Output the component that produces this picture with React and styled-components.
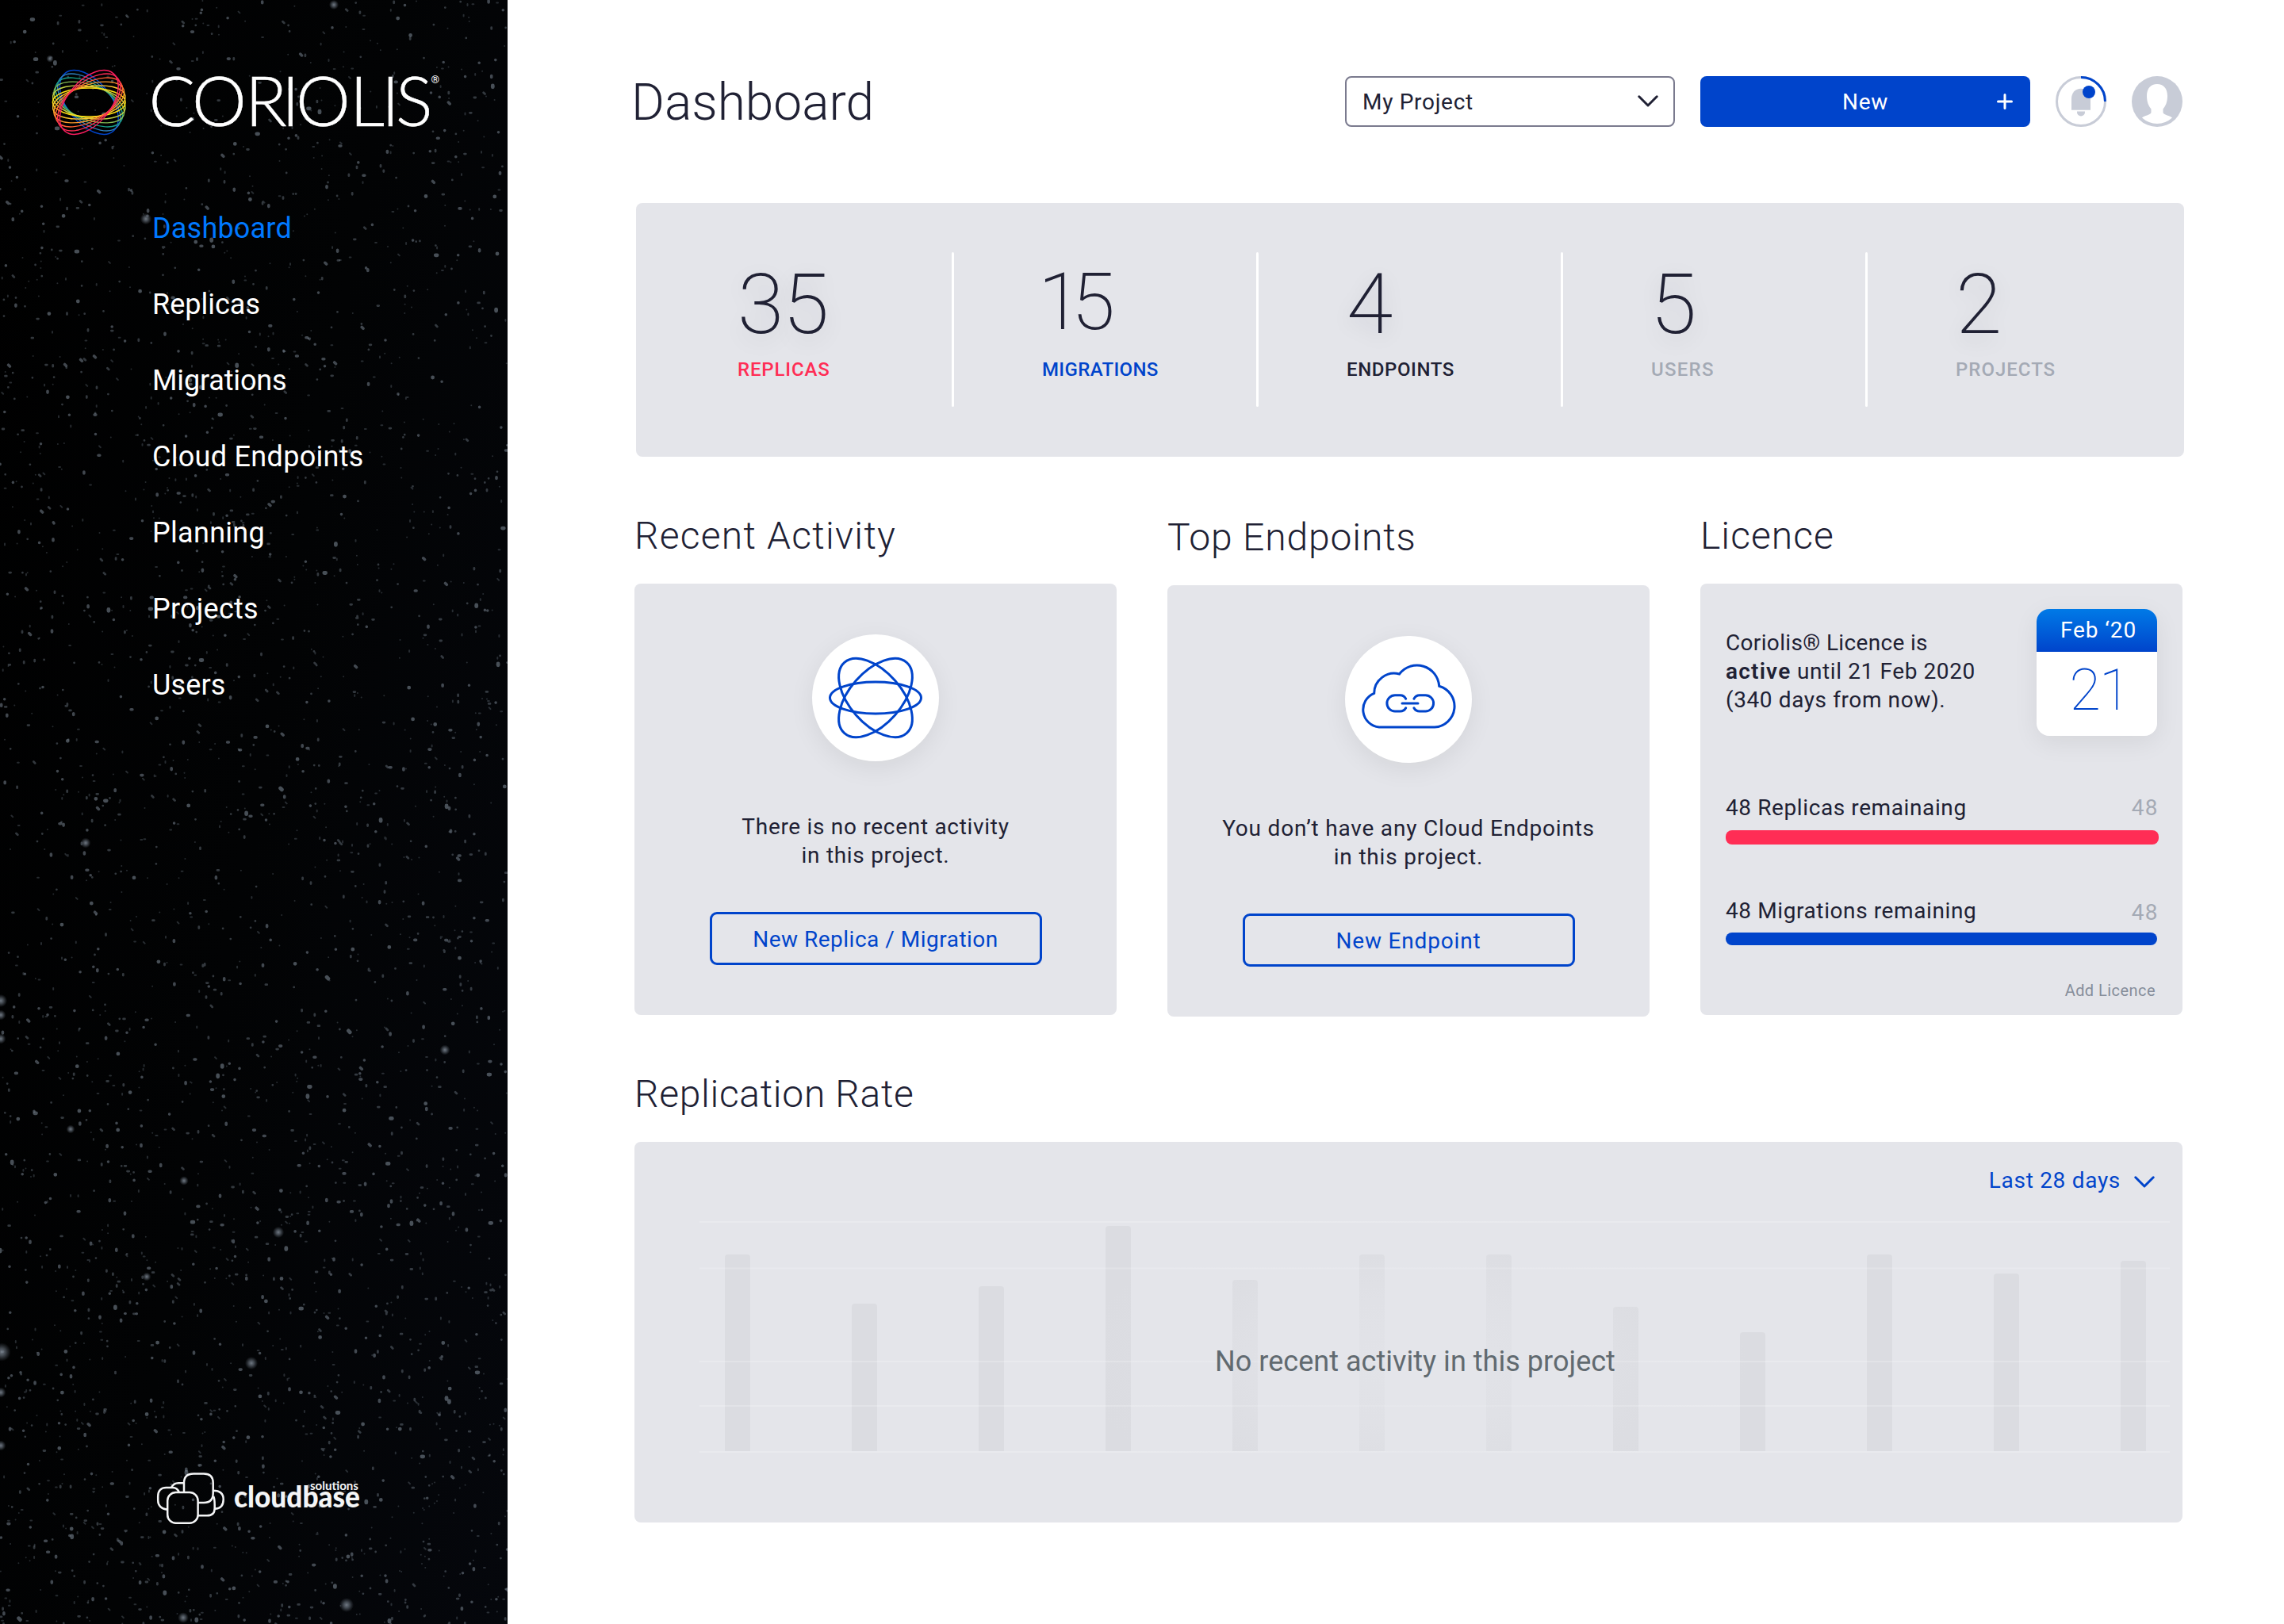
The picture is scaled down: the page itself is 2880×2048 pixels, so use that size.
import React from 'react';
import styled, { createGlobalStyle, css } from 'styled-components';

const color = {
  ink: '#202134',
  blue: '#0044cb',
  link: '#0078ff',
  red: '#ff2d55',
  panel: '#e4e5ea',
  muted: '#a4aab5',
  line: '#7a7a8e',
  grey: '#c8ccd7',
};

const GlobalStyle = createGlobalStyle`
  *, *::before, *::after { box-sizing: border-box; }
  body {
    margin: 0;
    background: #fff;
    color: ${color.ink};
    font-family: Roboto, "Liberation Sans", sans-serif;
    font-size: 28px;
    line-height: 36px;
    letter-spacing: 0.7px;
  }
  button { font: inherit; letter-spacing: inherit; color: inherit; margin: 0; cursor: pointer; }
  h1, h2, p { margin: 0; font-weight: 400; }
  svg { display: block; flex: none; }
`;

/* ---------- shell ---------- */

const Shell = styled.div`
  display: flex;
  width: 2880px;
  height: 2048px;
  overflow: hidden;
`;

const Sidebar = styled.aside`
  position: relative;
  display: flex;
  flex-direction: column;
  width: 640px;
  flex: none;
  padding: 87px 0 125px;
  background: linear-gradient(100deg, #000 0%, #020304 50%, #05070c 100%);
`;

const Sky = styled.svg`
  position: absolute;
  inset: 0;
`;

const Brand = styled.div`
  position: relative;
  margin-left: 65px;

  svg { overflow: visible; }
`;

const Nav = styled.nav`
  position: relative;
  display: flex;
  flex-direction: column;
  gap: 52px;
  margin: 95px 0 auto 192px;
`;

const NavItem = styled.a`
  font-size: 36px;
  line-height: 44px;
  letter-spacing: ${({ $track = 0.15 }) => $track}px;
  color: ${({ $active }) => ($active ? color.link : '#fff')};
  white-space: nowrap;
`;

const Vendor = styled.div`
  position: relative;
  margin-left: 198px;

  svg { overflow: visible; }
`;

const Main = styled.main`
  display: flex;
  flex-direction: column;
  flex: 1;
  min-width: 0;
  padding: 96px 128px 0 160px;
`;

/* ---------- header ---------- */

const Header = styled.header`
  display: flex;
  align-items: center;
  gap: 32px;
  width: 1952px;
  height: 64px;
`;

const PageTitle = styled.h1`
  flex: 1;
  margin-left: -4px;
  padding-top: 3px;
  font-size: 64px;
  font-weight: 300;
  line-height: 64px;
  letter-spacing: 0;
`;

const Select = styled.button`
  display: flex;
  align-items: center;
  justify-content: space-between;
  width: 416px;
  height: 64px;
  padding: 1px 19px 0 20px;
  border: 2px solid ${color.line};
  border-radius: 8px;
  background: #fff;

  svg { margin-top: -2px; }
`;

const PrimaryButton = styled.button`
  display: grid;
  grid-template-columns: 1fr auto 1fr;
  align-items: center;
  width: 416px;
  height: 64px;
  padding: 0 22px;
  border: 0;
  border-radius: 8px;
  background: ${color.blue};
  color: #fff;

  span { grid-column: 2; padding-top: 2px; }
  svg { justify-self: end; }
`;

/* ---------- stats ---------- */

const Stats = styled.section`
  display: flex;
  flex: none;
  width: 1952px;
  height: 320px;
  margin: 96px 0 0 2px;
  padding-left: 128px;
  border-radius: 8px;
  background: ${color.panel};
`;

const Stat = styled.div`
  display: flex;
  justify-content: space-between;
  flex: none;
  width: ${({ $last }) => ($last ? 272 : 384)}px;
`;

const StatBody = styled.div`
  padding-top: 75px;
`;

const StatValue = styled.div`
  height: 106px;
  margin-left: ${({ $shift }) => $shift}px;
  font-weight: 220;
  font-size: 106px;
  line-height: 107px;
  letter-spacing: -1.4px;
  text-shadow: 0 8px 28px rgba(32, 33, 52, 0.14);
  ${({ $compact }) => $compact && css`
    font-size: 100px;
    line-height: 99px;
    letter-spacing: -13px;
    text-shadow: none;
  `}
`;

const StatLabel = styled.div`
  margin-top: 15px;
  font-size: 24px;
  font-weight: 500;
  line-height: 28px;
  letter-spacing: ${({ $track }) => $track}px;
  color: ${({ $tone }) => $tone};
`;

const StatRule = styled.div`
  width: 3px;
  height: 195px;
  margin: 62px 111px 0 0;
  border-radius: 2px;
  background: #fff;
`;

/* ---------- panels ---------- */

const Columns = styled.div`
  display: grid;
  grid-template-columns: repeat(3, 608px);
  gap: 64px;
  height: 634px;
  margin-top: 72px;
`;

const Section = styled.section`
  padding-top: ${({ $drop = 0 }) => $drop}px;
`;

const Heading = styled.h2`
  font-size: 48px;
  font-weight: 300;
  line-height: 56px;
  letter-spacing: ${({ $track = 1.1 }) => $track}px;
`;

const Panel = styled.div`
  display: flex;
  flex-direction: column;
  height: ${({ $height = 544 }) => $height}px;
  margin-top: 32px;
  border-radius: 8px;
  background: ${color.panel};
`;

const EmptyPanel = styled(Panel)`
  align-items: center;
  padding-top: 64px;
`;

const Medallion = styled.div`
  width: 160px;
  height: 160px;
  border-radius: 50%;
  background: #fff;
  box-shadow: 0 8px 32px rgba(0, 0, 0, 0.07);
`;

const EmptyText = styled.p`
  margin-top: 65px;
  text-align: center;
  letter-spacing: ${({ $track }) => $track}px;
`;

const OutlineButton = styled.button`
  width: 419px;
  height: 67px;
  margin-top: 53px;
  padding: 2px 0 0;
  border: 3px solid ${color.blue};
  border-radius: 9px;
  background: transparent;
  color: ${color.blue};
  letter-spacing: ${({ $track }) => $track}px;
`;

/* ---------- licence ---------- */

const LicencePanel = styled(Panel)`
  padding: 32px 30px 0 32px;
`;

const LicenceTop = styled.div`
  display: flex;
  justify-content: space-between;
  padding-right: 2px;
`;

const LicenceText = styled.p`
  padding-top: 25px;
  letter-spacing: 0.6px;
  white-space: nowrap;

  span { letter-spacing: 0.34px; }
  strong { font-weight: 600; letter-spacing: 1.2px; }
`;

const Calendar = styled.div`
  width: 152px;
  height: 160px;
  overflow: hidden;
  border-radius: 16px;
  background: #fff;
  text-align: center;
`;

const CalendarShadow = styled.div`
  border-radius: 16px;
  box-shadow: 0 8px 32px rgba(0, 0, 0, 0.07);
`;

const CalendarMonth = styled.div`
  height: 54px;
  padding-left: 4px;
  background: linear-gradient(#007ae7, ${color.blue});
  color: #fff;
  line-height: 54px;
  letter-spacing: 0.9px;
`;

const CalendarDay = styled.div`
  padding-left: 6px;
  color: ${color.blue};
  font-size: 72px;
  font-weight: 270;
  line-height: 98px;
  letter-spacing: -2px;
`;

const Meter = styled.div`
  margin-top: ${({ $top }) => $top}px;
`;

const MeterLabel = styled.div`
  display: flex;
  justify-content: space-between;
  letter-spacing: 0.6px;
`;

const MeterTotal = styled.span`
  padding-top: ${({ $drop }) => $drop}px;
  color: ${color.muted};
  letter-spacing: 1.4px;
  height: 36px;
`;

const MeterBar = styled.div`
  width: ${({ $width }) => $width}px;
  height: ${({ $height }) => $height}px;
  margin-top: ${({ $top }) => $top}px;
  border-radius: 8px;
  background: ${({ $tone }) => $tone};
`;

const AddLicence = styled.a`
  align-self: flex-end;
  margin: 45px 4px 0 0;
  color: #868e9b;
  font-size: 20px;
  line-height: 24px;
  letter-spacing: 0.45px;
`;

/* ---------- chart ---------- */

const ChartSection = styled.section`
  margin-top: 70px;
`;

const Period = styled.button`
  display: flex;
  align-items: center;
  align-self: flex-end;
  gap: 17px;
  height: 36px;
  margin: 31px 35px 0 0;
  padding: 0;
  border: 0;
  background: none;
  color: ${color.blue};

  svg { margin-top: 3px; }
`;

const Plot = styled.div`
  position: relative;
  width: 1854px;
  height: 292px;
  margin: 33px 0 0 82px;
`;

const PlotMessage = styled.p`
  position: absolute;
  inset: 61px 49px 0 0;
  display: flex;
  align-items: center;
  justify-content: center;
  color: #616a70;
  font-size: 36px;
  line-height: 44px;
  letter-spacing: 0.03px;
`;

/* ---------- drawings ---------- */

function makeStars() {
  let seed = 20177;
  const rnd = () => {
    seed = (seed * 1664525 + 1013904223) % 4294967296;
    return seed / 4294967296;
  };
  const layers = [
    { n: 1500, w: 2, o: 0.32 },
    { n: 1000, w: 2.8, o: 0.42 },
    { n: 560, w: 3.6, o: 0.55 },
    { n: 130, w: 4.8, o: 0.6 },
  ];
  return layers.map(({ n, w, o }) => {
    let d = '';
    for (let i = 0; i < n; i += 1) {
      const x = rnd() * 640;
      const y = 2048 * (1 - Math.pow(rnd(), 1.15));
      const dx = rnd() < 0.25 ? 1.8 : 0;
      const dy = rnd() < 0.3 ? 1.8 : 0;
      d += `M${x.toFixed(1)} ${y.toFixed(1)}l${dx} ${dy}`;
    }
    return { d, w, o };
  });
}

const stars = makeStars();
const brightStars = [
  [184, 276, 4], [63, 74, 2.6], [2, 1705, 6.5], [317, 1719, 4.5], [351, 1554, 4], [437, 2024, 5],
  [231, 2040, 3.8], [561, 1324, 3.6], [1, 1262, 4.5], [1, 1280, 3.6], [1, 1310, 3.6], [232, 1489, 3.2],
  [1, 1756, 3.6], [1, 1823, 3.6], [421, 6, 3.4], [185, 1610, 3], [89, 1424, 3], [108, 1063, 3.6],
];

const StarField = () => (
  <Sky width="640" height="2048" viewBox="0 0 640 2048" aria-hidden="true">
    <defs>
      <radialGradient id="halo">
        <stop offset="0" stopColor="#848e9a" stopOpacity="0.85" />
        <stop offset="0.4" stopColor="#6f7985" stopOpacity="0.6" />
        <stop offset="1" stopColor="#5c6570" stopOpacity="0" />
      </radialGradient>
    </defs>
    {stars.map((s) => (
      <path key={s.w} d={s.d} stroke="#77828e" strokeWidth={s.w} strokeOpacity={s.o} strokeLinecap="round" fill="none" />
    ))}
    {brightStars.map(([x, y, r]) => (
      <circle key={`${x}-${y}`} cx={x} cy={y} r={r * 1.8} fill="url(#halo)" />
    ))}
  </Sky>
);

const ringColors = [
  '#0044cb', '#2f7fbd', '#179e87', '#86bd55', '#c3d545', '#ffe011',
  '#ffc52e', '#ff9a2d', '#ff6035', '#ff2d55', '#f81d5f',
];

const CoriolisLogo = () => (
  <svg width="490" height="84" viewBox="0 0 490 84" role="img" aria-label="Coriolis">
    <g fill="none" strokeWidth="1.4">
      {ringColors.map((c, i) => {
        const t = (i - 5) / 5;
        return (
          <ellipse
            key={c}
            rx={46 + 1.5 * Math.abs(t)}
            ry={18 + 9 * Math.abs(t)}
            stroke={c}
            transform={`translate(47.3 42) rotate(${-50 * t})`}
          />
        );
      })}
    </g>
    <text
      x="122.500 177 244 290 308 376 416 434"
      y="72"
      fill="#fff"
      stroke="#fff"
      strokeWidth="0.6"
      fontFamily="Lato, sans-serif"
      fontWeight="300"
      fontSize="87"
      letterSpacing="0"
    >
      CORIOLIS
    </text>
    <text x="478.500" y="18" fill="#fff" fontFamily="Roboto, sans-serif" fontSize="13.500" letterSpacing="0">®</text>
  </svg>
);

const CloudbaseLogo = () => (
  <svg width="260" height="66" viewBox="0 0 260 66" role="img" aria-label="Cloudbase Solutions">
    <g fill="none" stroke="#f4f5f6" strokeWidth="2.5">
      <path d="M13 46.7C5.500 46 1.200 41.500 1.200 35V30C1.200 22.500 5.500 18.900 11.500 18.900H19.500C24 18.900 26.500 21 27.800 25" />
      <path d="M18.200 18.700C20 15 23 13.300 27 13.300H34" />
      <path d="M70.600 22.800C78 22.800 83.700 26 83.700 34C83.700 41.500 80.500 45.500 72.700 45.700" />
      <path d="M71.200 30C72.500 33 72.700 36 72.700 41V45C72.700 51 69.500 54.300 63 54.300H52" />
      <path d="M34 25V13C34 5 38 1.400 46 1.400H59C67 1.400 70.700 5 70.700 13V26C70.700 34 66.500 38 59 38H52" />
      <rect x="13.200" y="25" width="38.400" height="38.700" rx="10.500" />
    </g>
    <g fill="#f4f5f6" fontFamily="Lato, sans-serif" letterSpacing="0">
      <text x="97" y="44" fontSize="38" fontWeight="900" textLength="159" lengthAdjust="spacingAndGlyphs">cloudbase</text>
      <text x="193" y="21.700" fontSize="16" fontWeight="700" textLength="61" lengthAdjust="spacingAndGlyphs">solutions</text>
    </g>
  </svg>
);

const Chevron = ({ stroke }) => (
  <svg width="26" height="15" viewBox="0 0 26 15" fill="none" stroke={stroke} strokeWidth="3" strokeLinecap="round" strokeLinejoin="round">
    <path d="M1.800 1.800L13 13L24.200 1.800" />
  </svg>
);

const Plus = () => (
  <svg width="20" height="20" viewBox="0 0 20 20" stroke="#fff" strokeWidth="3" strokeLinecap="round">
    <path d="M10 1.500V18.500M1.500 10H18.500" />
  </svg>
);

const BellIcon = () => (
  <svg width="64" height="64" viewBox="0 0 64 64">
    <circle cx="32" cy="32" r="30.500" fill="none" stroke={color.grey} strokeWidth="3" />
    <path d="M32 1.500A30.500 30.500 0 0 1 62.500 32" fill="none" stroke={color.blue} strokeWidth="3" />
    <path d="M20 42.700V28.500C20 21 25 15.700 32 15.700S44 21 44 28.500V42.700Z" fill={color.grey} />
    <path d="M27 44.500H37V45.500A5 5 0 0 1 27 45.500Z" fill={color.grey} />
    <circle cx="42" cy="20" r="8" fill={color.blue} />
  </svg>
);

const AvatarIcon = () => (
  <svg width="64" height="64" viewBox="0 0 64 64">
    <circle cx="32" cy="32" r="32" fill={color.grey} />
    <path
      d="M32 10C40 10 45 15.500 45 25C45 33 42.500 38 39.500 41.500V46C41 49.500 48 49.500 51 52.500A28 28 0 0 1 13 52.500C16 49.500 23 49.500 24.500 46V41.500C21.500 38 19 33 19 25C19 15.500 24 10 32 10Z"
      fill="#fff"
    />
  </svg>
);

const OrbitIcon = () => (
  <svg width="160" height="160" viewBox="0 0 160 160" fill="none" stroke={color.blue} strokeWidth="3">
    <ellipse cx="80" cy="80" rx="57.500" ry="20" />
    <ellipse cx="80" cy="80" rx="59.400" ry="32.800" transform="rotate(48.7 80 80)" />
    <ellipse cx="80" cy="80" rx="59.400" ry="32.800" transform="rotate(-48.7 80 80)" />
  </svg>
);

const CloudLinkIcon = () => (
  <svg width="160" height="160" viewBox="0 0 160 160" fill="none" stroke={color.blue} strokeWidth="3" strokeLinecap="round">
    <path d="M43 115A22.200 22.200 0 0 1 36.700 72.300A25.300 25.300 0 0 1 68.500 48A28 28 0 0 1 118.700 63.200A26.400 26.400 0 0 1 113 115Z" strokeLinejoin="miter" />
    <path d="M76.700 79.200C75 76 73 74.800 69.500 74.800H63A10.100 10.100 0 0 0 63 95H69.500C73 95 75 94 76.700 90.800" />
    <path d="M86.900 79.200C88.600 76 90.600 74.800 94.100 74.800H101.500A10.100 10.100 0 0 1 101.500 95H94.100C90.600 95 88.600 94 86.900 90.800" />
    <path d="M72 85H92" />
  </svg>
);

const barHeights = [248, 186, 208, 284, 216, 248, 248, 182, 150, 248, 224, 240];
const gridLines = [1, 59.5, 177, 233, 291];

const RateChart = () => (
  <svg width="1854" height="292" viewBox="0 0 1854 292">
    <defs>
      <radialGradient id="veil" gradientUnits="userSpaceOnUse" cx="0" cy="0" r="1" gradientTransform="translate(902 177) scale(430 205)">
        <stop offset="0" stopColor={color.panel} stopOpacity="0.8" />
        <stop offset="0.4" stopColor={color.panel} stopOpacity="0.55" />
        <stop offset="0.75" stopColor={color.panel} stopOpacity="0.12" />
        <stop offset="1" stopColor={color.panel} stopOpacity="0" />
      </radialGradient>
    </defs>
    {barHeights.map((h, i) => (
      <path
        key={i}
        d={`M${32 + i * 160} 290V${294 - h}q0 -4 4 -4h24q4 0 4 4V290Z`}
        fill="#dbdce1"
      />
    ))}
    {gridLines.map((y) => (
      <path key={y} d={`M0 ${y}H1854`} stroke="#fff" strokeOpacity="0.2" strokeWidth="2" />
    ))}
    <rect width="1854" height="292" fill="url(#veil)" />
  </svg>
);

/* ---------- page ---------- */

const navItems = [
  { label: 'Dashboard', active: true, track: 0.2 },
  { label: 'Replicas', track: 0 },
  { label: 'Migrations', track: -0.15 },
  { label: 'Cloud Endpoints', track: 0.3 },
  { label: 'Planning', track: 0.3 },
  { label: 'Projects', track: 0.22 },
  { label: 'Users' },
];

const stats = [
  { value: '35', label: 'Replicas', tone: color.red, track: 0.85, shift: 0 },
  { value: '15', label: 'Migrations', tone: color.blue, track: 0.35, shift: -5 },
  { value: '4', label: 'Endpoints', tone: color.ink, track: 0.6, shift: 0 },
  { value: '5', label: 'Users', tone: color.muted, track: 1.25, shift: -1 },
  { value: '2', label: 'Projects', tone: color.muted, track: 1, shift: 0 },
];

export default function App() {
  return (
    <Shell>
      <GlobalStyle />
      <Sidebar>
        <StarField />
        <Brand><CoriolisLogo /></Brand>
        <Nav>
          {navItems.map((item) => (
            <NavItem key={item.label} $active={item.active} $track={item.track}>{item.label}</NavItem>
          ))}
        </Nav>
        <Vendor><CloudbaseLogo /></Vendor>
      </Sidebar>

      <Main>
        <Header>
          <PageTitle>Dashboard</PageTitle>
          <Select>My Project<Chevron stroke={color.ink} /></Select>
          <PrimaryButton><span>New</span><Plus /></PrimaryButton>
          <BellIcon />
          <AvatarIcon />
        </Header>

        <Stats>
          {stats.map((s, i) => {
            const last = i === stats.length - 1;
            return (
              <Stat key={s.label} $last={last}>
                <StatBody>
                  <StatValue $shift={s.shift} $compact={s.value === '15'}>{s.value}</StatValue>
                  <StatLabel $tone={s.tone} $track={s.track}>{s.label.toUpperCase()}</StatLabel>
                </StatBody>
                {!last && <StatRule />}
              </Stat>
            );
          })}
        </Stats>

        <Columns>
          <Section>
            <Heading $track={1.24}>Recent Activity</Heading>
            <EmptyPanel>
              <Medallion><OrbitIcon /></Medallion>
              <EmptyText $track={0.7}>There is no recent activity<br />in this project.</EmptyText>
              <OutlineButton $track={0.5}>New Replica / Migration</OutlineButton>
            </EmptyPanel>
          </Section>

          <Section $drop={2}>
            <Heading $track={0.87}>Top Endpoints</Heading>
            <EmptyPanel>
              <Medallion><CloudLinkIcon /></Medallion>
              <EmptyText $track={0.8}>You don’t have any Cloud Endpoints<br />in this project.</EmptyText>
              <OutlineButton $track={0.82}>New Endpoint</OutlineButton>
            </EmptyPanel>
          </Section>

          <Section>
            <Heading $track={1.03}>Licence</Heading>
            <LicencePanel>
              <LicenceTop>
                <LicenceText>
                  <span>Coriolis® Licence is</span><br />
                  <strong>active</strong> until 21 Feb 2020<br />
                  (340 days from now).
                </LicenceText>
                <CalendarShadow>
                  <Calendar>
                    <CalendarMonth>Feb ‘20</CalendarMonth>
                    <CalendarDay>21</CalendarDay>
                  </Calendar>
                </CalendarShadow>
              </LicenceTop>
              <Meter $top={73}>
                <MeterLabel>48 Replicas remainaing<MeterTotal $drop={0}>48</MeterTotal></MeterLabel>
                <MeterBar $tone={color.red} $width={546} $height={18} $top={10} />
              </Meter>
              <Meter $top={66}>
                <MeterLabel>48 Migrations remaining<MeterTotal $drop={2}>48</MeterTotal></MeterLabel>
                <MeterBar $tone={color.blue} $width={544} $height={16} $top={9} />
              </Meter>
              <AddLicence>Add Licence</AddLicence>
            </LicencePanel>
          </Section>
        </Columns>

        <ChartSection>
          <Heading $track={0.68}>Replication Rate</Heading>
          <Panel $height={480}>
            <Period>Last 28 days<Chevron stroke={color.blue} /></Period>
            <Plot>
              <RateChart />
              <PlotMessage>No recent activity in this project</PlotMessage>
            </Plot>
          </Panel>
        </ChartSection>
      </Main>
    </Shell>
  );
}
